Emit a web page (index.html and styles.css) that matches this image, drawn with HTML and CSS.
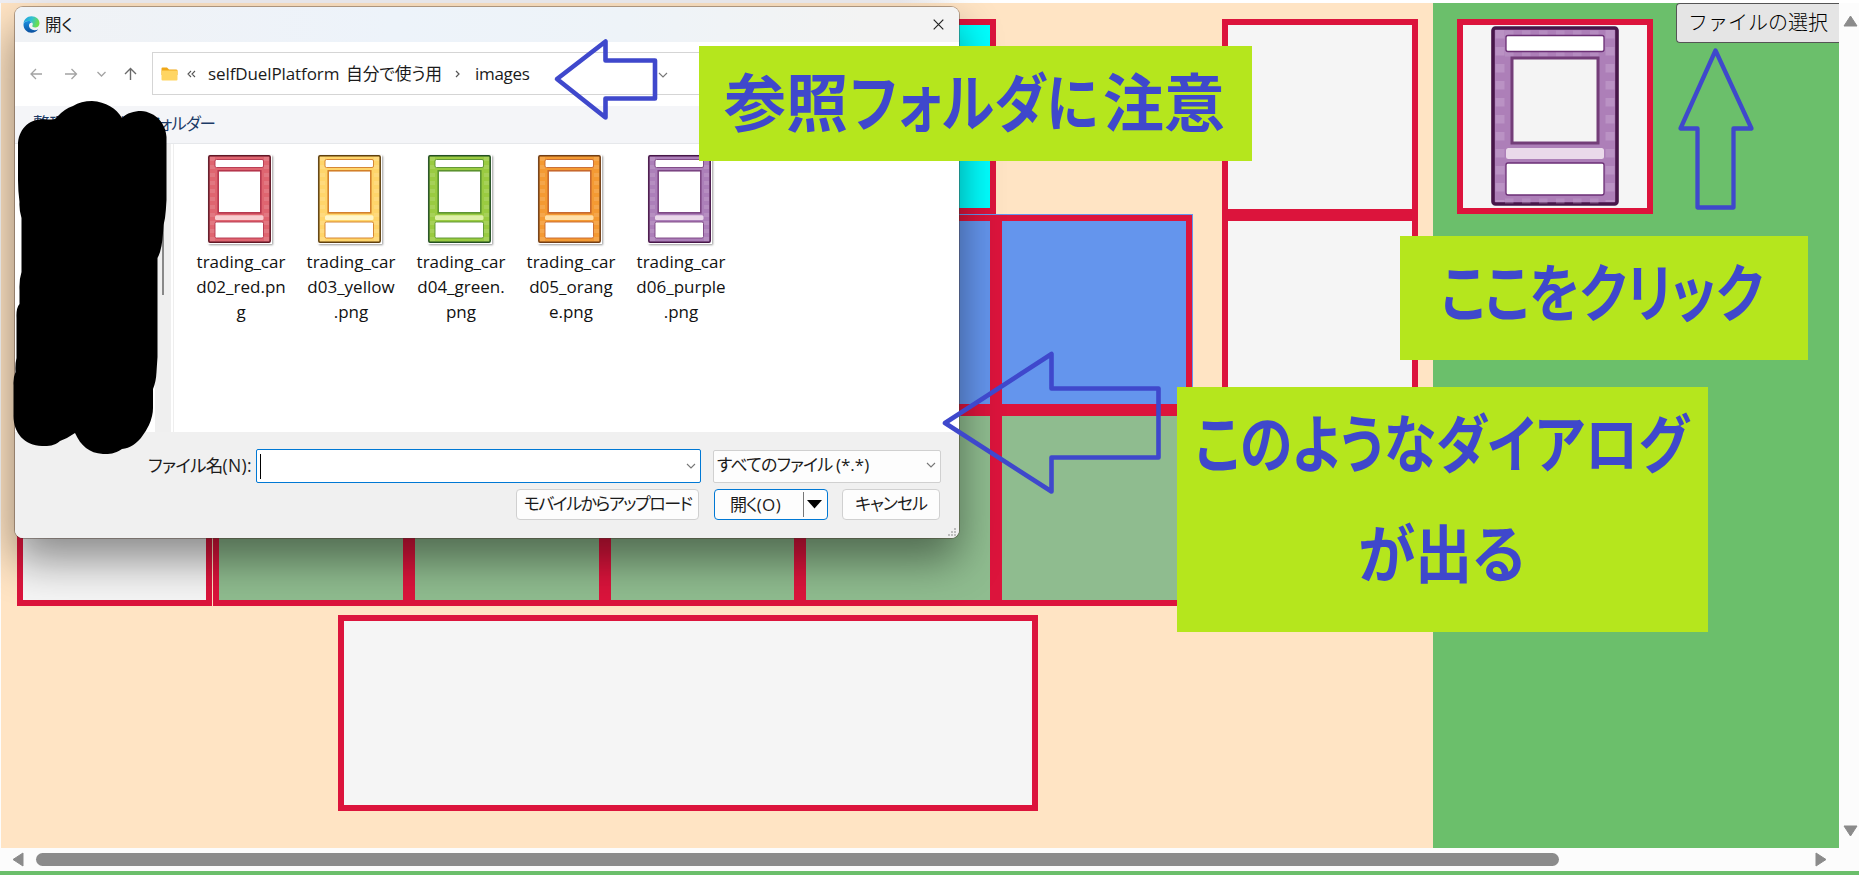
FILE: index.html
```
<!DOCTYPE html>
<html lang="ja">
<head>
<meta charset="utf-8">
<title>selfDuelPlatform</title>
<link rel="stylesheet" href="styles.css">
</head>
<body>
<svg width="0" height="0" class="defs">
  <defs>
    <symbol id="card" viewBox="0 0 64 89" preserveAspectRatio="none">
      <rect x=".8" y=".8" width="61.400" height="86.400" rx="1.200" fill="var(--fill)" stroke="var(--edge)" stroke-width="1.500"/>
      <path d="M4.500 2v84M58.500 2v84" stroke="#fff" stroke-opacity=".12" stroke-width="5" stroke-dasharray="4 4"/>
      <rect x="7" y="4.500" width="48.500" height="8" rx="1.500" fill="#fff" stroke="var(--line)" stroke-width=".9"/>
      <rect x="10.200" y="15.800" width="42.600" height="42" fill="var(--hole)" stroke="var(--line)" stroke-width="1.500"/>
      <rect x="7" y="60.300" width="48.500" height="4.800" rx="1.500" fill="var(--band)"/>
      <rect x="7" y="67" width="48.500" height="16" rx="1.500" fill="#fff" stroke="var(--line)" stroke-width=".9"/>
    </symbol>
    <symbol id="chev" viewBox="0 0 10 6"><path d="M1 1l4 4 4-4" fill="none" stroke="#777" stroke-width="1.100"/></symbol>
  </defs>
</svg>
<div class="screen">
  <div class="strip"></div>
  <div class="main">
    <div class="field">
      <div class="rows">
        <div class="row">
          <div class="cell lone grey"></div>
          <div class="zone"><div class="cell none"></div><div class="cell none"></div><div class="cell none"></div><div class="cell cyan"></div></div>
        </div>
        <div class="row">
          <div class="cell lone grey"></div>
          <div class="zone blue"><div class="cell"></div><div class="cell"></div><div class="cell"></div><div class="cell"></div><div class="cell"></div></div>
        </div>
        <div class="row last">
          <div class="cell lone grey"></div>
          <div class="zone green"><div class="cell"></div><div class="cell"></div><div class="cell"></div><div class="cell"></div><div class="cell"></div></div>
        </div>
        <div class="hand"></div>
      </div>
      <div class="side"><div class="cell grey"></div><div class="cell grey"></div></div>
    </div>
    <div class="panel">
      <div class="deck"><svg class="bigcard" viewBox="0 0 128 180">
        <rect x="2" y="2" width="124" height="176" rx="2.500" fill="#ad7fb8" stroke="#471649" stroke-width="3.600"/>
        <path d="M9 4v172M119 4v172" stroke="#c7a5cf" stroke-opacity=".5" stroke-width="9" stroke-dasharray="8.500 8.500"/>
        <path d="M14 7h100M14 28h100M14 175h100" stroke="#c7a5cf" stroke-opacity=".35" stroke-width="5" stroke-dasharray="8.500 8.500"/>
        <rect x="15" y="9.500" width="98" height="16" rx="2" fill="#fff" stroke="#6b2f75" stroke-width="1.300"/>
        <rect x="21" y="32" width="86" height="85" fill="#f4f4f4" stroke="#733d78" stroke-width="3"/>
        <rect x="15" y="122" width="98" height="11" rx="2.500" fill="#ead9ea"/>
        <rect x="15" y="137" width="98" height="32" rx="2" fill="#fff" stroke="#6b2f75" stroke-width="1.300"/>
      </svg></div>
      <div class="filebtn">ファイルの選択</div>
    </div>
    <div class="vbar">
      <svg width="15" height="12" viewBox="0 0 15 12"><path d="M7.500 1L14 11H1z" fill="#8b8b8b" stroke="#8b8b8b" stroke-linejoin="round"/></svg>
      <svg width="15" height="12" viewBox="0 0 15 12"><path d="M7.500 11L14 1H1z" fill="#8b8b8b" stroke="#8b8b8b" stroke-linejoin="round"/></svg>
    </div>
  </div>
  <div class="hbar">
    <svg width="12" height="15" viewBox="0 0 12 15"><path d="M1 7.500L11 1v13z" fill="#8b8b8b" stroke="#8b8b8b" stroke-linejoin="round"/></svg>
    <div class="thumb"></div>
    <svg width="12" height="15" viewBox="0 0 12 15"><path d="M11 7.500L1 1v13z" fill="#8b8b8b" stroke="#8b8b8b" stroke-linejoin="round"/></svg>
  </div>
  <div class="foot"></div>

  <div class="dialog">
    <div class="title">
      <svg width="17" height="17" viewBox="0 0 17 17">
        <defs>
          <linearGradient id="e1" x1="0" y1="0" x2="1" y2=".3"><stop offset="0" stop-color="#1b9de2"/><stop offset=".55" stop-color="#35c1d0"/><stop offset="1" stop-color="#6be04c"/></linearGradient>
          <linearGradient id="e2" x1="0" y1="0" x2="0" y2="1"><stop offset="0" stop-color="#1a8fe0"/><stop offset="1" stop-color="#0b4f9e"/></linearGradient>
        </defs>
        <path d="M.5 8C.8 3.500 4.200.3 8.500.3c4.600 0 8 3.200 8 7 0 2.800-2 4.200-4.300 4.200-1.900 0-3-.7-3-1.400 0-.5.600-.7.600-1.800C9.800 6.500 8 5 5.500 5 3 5 1.200 6.200.5 8z" fill="url(#e1)"/>
        <path d="M.5 8C1.200 6.200 3 5 5.500 5 7.200 5 8.400 5.700 9.100 6.600 7.500 6.500 6 7.800 6 9.600c0 2.700 2.600 4.600 5.600 4.600 1.500 0 2.700-.4 3.600-.9-1.500 2.200-3.900 3.500-6.700 3.500C4 16.800.2 13 .5 8z" fill="url(#e2)"/>
      </svg>
      <span>開く</span>
      <svg class="close" width="11" height="11" viewBox="0 0 11 11"><path d="M.7.7l9.600 9.600M10.300.7L.7 10.300" stroke="#222" stroke-width="1.200"/></svg>
    </div>
    <div class="nav">
      <svg width="110" height="16" viewBox="0 0 110 16" fill="none" stroke-width="1.300">
        <path d="M14 8H3M8 3L3 8l5 5M37 8h11.500M43.500 3l5 5-5 5" stroke="#a3a3a3"/>
        <path d="M69.500 6l4 4 4-4" stroke="#a3a3a3"/>
        <path d="M102.500 14V2.500M97 8l5.500-5.500L108 8" stroke="#6a6a6a" stroke-width="1.400"/>
      </svg>
      <div class="address">
        <svg width="17" height="14" viewBox="0 0 17 14"><path d="M.5 1.500Q.5.500 1.500.500H6l2 2h7q1.500 0 1.500 1V8H.5z" fill="#f0a818"/><rect x=".5" y="3.500" width="16" height="10" rx="1" fill="#ffd562"/></svg>
        <svg class="dbl" width="9" height="8" viewBox="0 0 9 8"><path d="M4 1L1 4l3 3M8 1L5 4l3 3" fill="none" stroke="#555" stroke-width="1.100"/></svg>
        <span class="p1">selfDuelPlatform</span><span class="p2">自分で使う用</span>
        <svg class="sep" width="5" height="8" viewBox="0 0 5 8"><path d="M1 1l3 3-3 3" fill="none" stroke="#555" stroke-width="1.200"/></svg>
        <span class="p3">images</span>
        <svg class="drop" width="10" height="6"><use href="#chev"/></svg>
      </div>
    </div>
    <div class="tools"><span>整理</span><span class="new">新しいフォルダー</span></div>
    <div class="content">
      <div class="tree"><div class="treebar"></div></div>
      <div class="files">
        <div class="file red"><svg class="thumbnail"><use href="#card"/></svg><p>trading_car<br>d02_red.pn<br>g</p></div>
        <div class="file yellow"><svg class="thumbnail"><use href="#card"/></svg><p>trading_car<br>d03_yellow<br>.png</p></div>
        <div class="file lime"><svg class="thumbnail"><use href="#card"/></svg><p>trading_car<br>d04_green.<br>png</p></div>
        <div class="file orange"><svg class="thumbnail"><use href="#card"/></svg><p>trading_car<br>d05_orang<br>e.png</p></div>
        <div class="file purple"><svg class="thumbnail"><use href="#card"/></svg><p>trading_car<br>d06_purple<br>.png</p></div>
      </div>
    </div>
    <div class="footer">
      <div class="line">
        <span class="flabel">ファイル名<i>(N):</i></span>
        <div class="input"><b></b><svg width="10" height="6"><use href="#chev"/></svg></div>
        <div class="select"><span>すべてのファイル <i>(*.*)</i></span><svg width="10" height="6"><use href="#chev"/></svg></div>
      </div>
      <div class="line buttons">
        <div class="btn upload">モバイルからアップロード</div>
        <div class="btn open"><span>開く<i>(O)</i></span><b></b><svg width="15" height="9" viewBox="0 0 15 9"><path d="M0 0h15L7.500 8.500z"/></svg></div>
        <div class="btn cancel">キャンセル</div>
      </div>
    </div>
    <svg class="grip" width="8" height="8" viewBox="0 0 8 8" fill="#bdbdbd"><path d="M6 0h2v2H6zM3 3h2v2H3zM6 3h2v2H6zM0 6h2v2H0zM3 6h2v2H3zM6 6h2v2H6z"/></svg>
  </div>

  <svg class="notes" width="1859" height="875" viewBox="0 0 1859 875">
    <path d="M18 145C18 129 30 117 47 119.500Q56 120 57 117Q64 109 73 106Q81 101 92 101C106 102 116 108 122 118C127 113 134 111 141 111C156 112 166 124 166.500 137V200Q166 210 165 218Q163 225 163 233Q162 250 157.500 258V357Q157 364 156.500 372Q156 382 153 389V408Q153 416 149 425Q146 431 143 435C137 444 130 448 122 449C114 454 110 454 103 454C89 453 81 446 75 433Q68 438 60 441C54 446 49 446 42 446C24 446 13 432 13.500 415V385Q13 378 15.500 372Q15 364 16.500 358V318Q16 308 19.500 304V290Q19 280 21.500 272V218Q19 210 19.500 202Q18 190 18 180z" fill="#000"/>
    <g fill="#b5e61d"><path d="M699 46h553v115H699zM1400 236h408v124h-408zM1177 387h531v245h-531z"/></g>
    <g fill="none" stroke="#3f48cc" stroke-width="4.600" stroke-linejoin="round">
      <path d="M557 79L605.500 41.500V60.500H655V98.500H605.500V117.500z"/>
      <path d="M945 423L1051.500 354V388.500H1158.500V457.500H1051.500V491.500z"/>
      <path d="M1715.500 50.500L1751.500 128.500H1733.500V207.500H1697.500V128.500H1680.500z" stroke-width="4.300"/>
    </g>
    <g class="words">
      <text x="724" y="126" textLength="124" lengthAdjust="spacingAndGlyphs">参照</text>
      <text x="850" y="126" textLength="248" lengthAdjust="spacingAndGlyphs">フォルダに</text>
      <text x="1103" y="126" textLength="122" lengthAdjust="spacingAndGlyphs">注意</text>
      <text x="1441" y="316" textLength="322" lengthAdjust="spacingAndGlyphs">ここをクリック</text>
      <text x="1195" y="467" textLength="494" lengthAdjust="spacingAndGlyphs">このようなダイアログ</text>
      <text x="1358" y="577" textLength="167" lengthAdjust="spacingAndGlyphs">が出る</text>
    </g>
  </svg>
</div>
</body>
</html>
```
FILE: styles.css
```
* { box-sizing: border-box; }
body { margin: 0; overflow: hidden; font-family: "Open Sans", "Noto Sans CJK JP", sans-serif; color: #1b1b1b; }
i { font-style: normal; letter-spacing: -.2px; }
svg { display: block; flex: none; }
.defs { position: absolute; }
.screen { position: relative; width: 1859px; height: 875px; background: #fcfcfc; display: flex; flex-direction: column; overflow: hidden; }
.strip { height: 3px; background: linear-gradient(90deg, #f0eff3 0 900px, #fff 960px); }
.main { height: 845px; padding-left: 1px; display: flex; }
.field { width: 1432px; background: #ffe4c4; display: flex; padding: 15px 15px 0 16px; justify-content: space-between; }
.panel { width: 406px; background: #6bbf6b; display: flex; justify-content: space-between; align-items: flex-start; }
.vbar { width: 20px; display: flex; flex-direction: column; justify-content: space-between; padding: 12px 0 11px 4px; }
.hbar { height: 23px; display: flex; align-items: center; padding: 0 32px 0 12px; }
.thumb { width: 1523px; height: 13px; margin: 0 auto 0 12px; border-radius: 7px; background: #8b8b8b; }
.foot { height: 4px; background: #6bbf6b; }

.row { display: flex; height: 196px; gap: 1px; }
.zone { display: flex; width: 979.500px; padding-top: 1px; }
.cell { width: 195.800px; height: 195px; border: 6px solid #dc143c; flex: none; }
.lone { width: 195px; margin-top: 1px; }
.last .zone, .last { padding-top: 0; }
.last .lone { margin-top: 0; }
.last .cell { height: 196px; }
.grey { background: #f5f5f5; }
.none { visibility: hidden; }
.cyan { background: #0ff; }
.blue { background: #6495ed; }
.green { background: #8fbc8f; }
.hand { width: 700px; height: 196px; margin: 9px 0 0 321px; border: 6px solid #dc143c; background: #f5f5f5; }
.side { display: flex; flex-direction: column; padding-top: 1px; }
.side .cell { width: 196px; height: 196px; }
.deck { width: 196px; height: 195px; margin: 16px 0 0 24px; border: 6px solid #dc143c; background: #f5f5f5; padding: 1px 0 0 28px; }
.bigcard { width: 128px; height: 180px; }
.filebtn { width: 163px; height: 40px; border: 1.500px solid #555; border-right: 0; border-radius: 4px 0 0 4px; background: #e5e5e5; padding-left: 11px; font: 300 20px/36px "Noto Sans CJK JP", sans-serif; color: #000; white-space: nowrap; }

.dialog { position: absolute; left: 15px; top: 7px; width: 944px; height: 531px; background: #fff; border-radius: 8px; display: flex; flex-direction: column; overflow: visible; box-shadow: 0 0 0 1px rgba(70,50,40,.4), 0 22px 44px rgba(0,0,0,.44); font-feature-settings: "palt"; }
.title { height: 35px; display: flex; align-items: center; padding: 0 15px 0 8px; gap: 5px; border-radius: 8px 8px 0 0; background: linear-gradient(90deg, #f0f2f5, #edf3fa 40%, #eef3f8 65%, #f3f3f3 90%); font-size: 16.500px; line-height: 20px; }
.title .close { margin-left: auto; }
.nav { height: 64px; display: flex; align-items: center; padding: 0 0 1px 13px; }
.address { display: flex; align-items: center; width: 807px; height: 43px; margin-left: 14px; border: 1px solid #d5d5d5; border-right: 0; padding-left: 8px; font-size: 17px; line-height: 24px; white-space: nowrap; }
.dbl { margin-left: 9px; }
.p1 { margin-left: 12px; width: 138px; letter-spacing: -.1px; }
.p2 { width: 96px; font-size: 16.800px; letter-spacing: -.1px; }
.sep { margin-left: 13px; }
.p3 { margin-left: 15px; width: 58px; letter-spacing: -.3px; }
.drop { margin-left: 125px; margin-top: 3px; }
.tools { height: 38px; background: #f4f5f8; border-bottom: 1px solid #e6e8eb; display: flex; align-items: center; padding: 0 0 2px 18px; font-size: 16.500px; line-height: 22px; color: #1b3a66; white-space: nowrap; }
.tools .new { width: 132px; margin-left: 17px; text-align: right; letter-spacing: -1px; }
.content { height: 288px; display: flex; }
.tree { width: 159px; border-right: 1px solid #eee; padding-left: 140px; }
.treebar { width: 16px; height: 288px; background: linear-gradient(#888, #888) 7px 0 / 2px 151px no-repeat #efefef; }
.files { display: flex; padding: 11px 0 0 11px; }
.file { width: 110px; display: flex; flex-direction: column; align-items: center; --hole: #fff; }
.thumbnail { width: 64px; height: 89px; background: #fff; box-shadow: 1px 1px 2px rgba(0,0,0,.4); }
.file p { margin: 5px -2px 0 0; font-size: 17px; line-height: 25px; text-align: center; white-space: nowrap; color: #111; }
.red { --fill: #df6570; --edge: #611725; --line: #b3324a; --band: #f8cdd0; }
.yellow { --fill: #ffd56b; --edge: #60400f; --line: #d17c25; --band: #fff7cb; }
.lime { --fill: #9acb41; --edge: #245022; --line: #58902c; --band: #def0a8; }
.orange { --fill: #f49a33; --edge: #733e15; --line: #c5652b; --band: #ffe0a9; }
.purple { --fill: #ac7fb9; --edge: #471649; --line: #78407f; --band: #ead8ea; }
.footer { height: 106px; background: #f0f0f0; border-radius: 0 0 8px 8px; padding-top: 17px; font-size: 17px; line-height: 24px; white-space: nowrap; }
.line { display: flex; height: 34px; align-items: center; }
.flabel { width: 108px; margin-left: 133px; padding-bottom: 2px; letter-spacing: -.7px; font-size: 17.500px; }
.flabel i { letter-spacing: .3px; }
.input { width: 445px; height: 34px; border: 1px solid #0078d4; border-radius: 2px; background: #fff; display: flex; align-items: center; justify-content: space-between; padding: 0 4px 0 3px; }
.input b { width: 1px; height: 25px; background: #000; }
.select { width: 228px; height: 33px; margin-left: 12px; border: 1px solid #d0d0d0; border-radius: 2px; background: #fdfdfd; display: flex; align-items: center; justify-content: space-between; padding: 0 4px 2px 3px; letter-spacing: -.8px; }
.select i { letter-spacing: 0; }
.buttons { height: 31px; margin-top: 6px; padding-left: 501px; }
.btn { height: 31px; border: 1px solid #d0d0d0; border-radius: 4px; background: #fdfdfd; display: flex; align-items: center; justify-content: center; letter-spacing: -1px; padding-bottom: 1px; }
.upload { width: 183px; letter-spacing: -1.500px; }
.open { width: 114px; margin-left: 15px; border: 1.500px solid #0078d4; padding: 0 5px 0 15px; justify-content: flex-start; }
.open i { letter-spacing: .4px; }
.open span { width: 73px; }
.open b { width: 1.500px; height: 25px; background: #777; margin-right: 3px; }
.cancel { width: 98px; margin-left: 14px; }
.grip { position: absolute; right: 3px; bottom: 2px; }

.notes { position: absolute; left: 0; top: 0; }
.words { font: bold 63px "Noto Sans CJK JP", sans-serif; font-feature-settings: "palt"; fill: #3f48cc; }
```
